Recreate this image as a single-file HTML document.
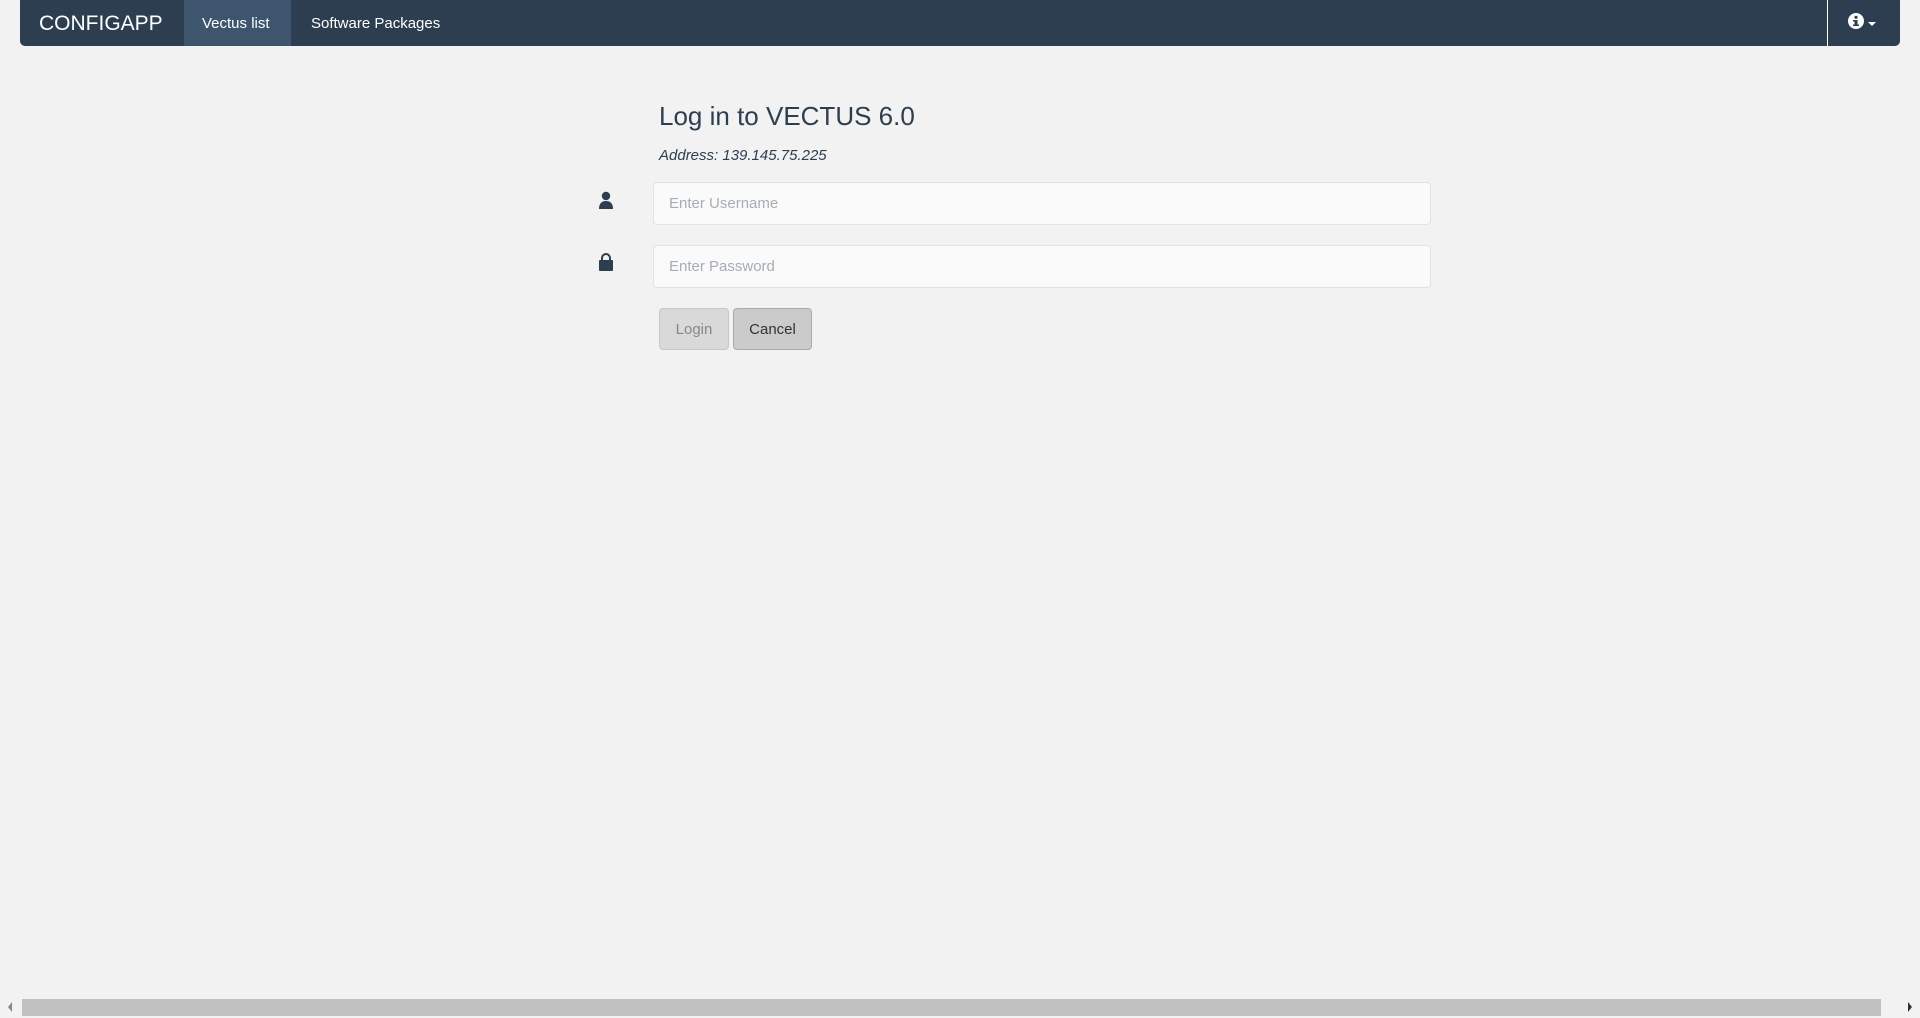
<!DOCTYPE html>
<html><head><meta charset="utf-8"><style>
body{margin:0;width:1920px;height:1018px;background:#f2f2f2;font-family:"Liberation Sans",sans-serif;position:relative;overflow:hidden}
.nav{position:absolute;left:20px;top:0;width:1880px;height:46px;background:#2c3e50;border-radius:0 0 5px 5px}
.brand{position:absolute;left:19px;top:12px;color:#fff;font-size:21px}
.act{position:absolute;left:164px;top:0;width:107px;height:46px;background:#3d566e}
.n{position:absolute;top:15px;color:#fff;font-size:15px}
.div{position:absolute;left:1807px;top:0;width:1px;height:46px;background:#fff}
.t{position:absolute;left:659px;top:101px;font-size:26px;color:#2c3e50}
.a{position:absolute;left:659px;top:147px;font-size:15px;font-style:italic;color:#2c3e50}
.in{position:absolute;left:653px;width:778px;height:43px;background:#fafafa;border:1px solid #dde3e8;border-radius:4px;box-sizing:border-box;font-size:15px;color:#a5adb5;padding:12px 0 0 15px}
.b{position:absolute;top:308px;height:42px;border:1px solid #bbb;border-radius:4px;box-sizing:border-box;font-size:15px;text-align:center;padding-top:12px}
.sb{position:absolute;left:22px;top:999px;width:1859px;height:17px;background:#c1c1c1}
</style></head><body>
<div class="nav">
<div class="brand">CONFIGAPP</div>
<div class="act"></div>
<div class="n" style="left:182px">Vectus list</div>
<div class="n" style="left:291px">Software Packages</div>
<div class="div"></div>
<svg style="position:absolute;left:1828px;top:13px" width="34" height="18"><circle cx="8" cy="8" r="8" fill="#fff"/><rect x="6.5" y="7" width="3" height="6" fill="#2c3e50"/><rect x="5" y="7" width="4" height="1.5" fill="#2c3e50"/><rect x="5" y="11.5" width="6" height="1.5" fill="#2c3e50"/><circle cx="8" cy="4.3" r="1.6" fill="#2c3e50"/><path d="M20 9h8l-4 4z" fill="#fff"/></svg>
</div>
<div class="t">Log in to VECTUS 6.0</div>
<div class="a">Address: 139.145.75.225</div>
<svg style="position:absolute;left:597px;top:191px" width="18" height="18"><circle cx="9" cy="5" r="4.2" fill="#2c3e50"/><path d="M2 18c0-6 3-8 7-8s7 2 7 8z" fill="#2c3e50"/></svg>
<svg style="position:absolute;left:597px;top:253px" width="18" height="19"><path d="M5 8V5a4 4 0 0 1 8 0v3" stroke="#2c3e50" stroke-width="2" fill="none"/><rect x="2" y="7" width="14" height="11" rx="1" fill="#2c3e50"/></svg>
<div class="in" style="top:182px">Enter Username</div>
<div class="in" style="top:245px">Enter Password</div>
<div class="b" style="left:659px;width:70px;background:#d9d9d9;color:#888;border-color:#c8c8c8">Login</div>
<div class="b" style="left:733px;width:79px;background:#cbcbcb;color:#333;border-color:#aaa">Cancel</div>
<div class="sb"></div>
<svg style="position:absolute;left:7px;top:1002px" width="6" height="10"><path d="M5 0L1 5l4 5z" fill="#888"/></svg>
<svg style="position:absolute;left:1907px;top:1002px" width="6" height="10"><path d="M1 0l4 5-4 5z" fill="#333"/></svg>
</body></html>
